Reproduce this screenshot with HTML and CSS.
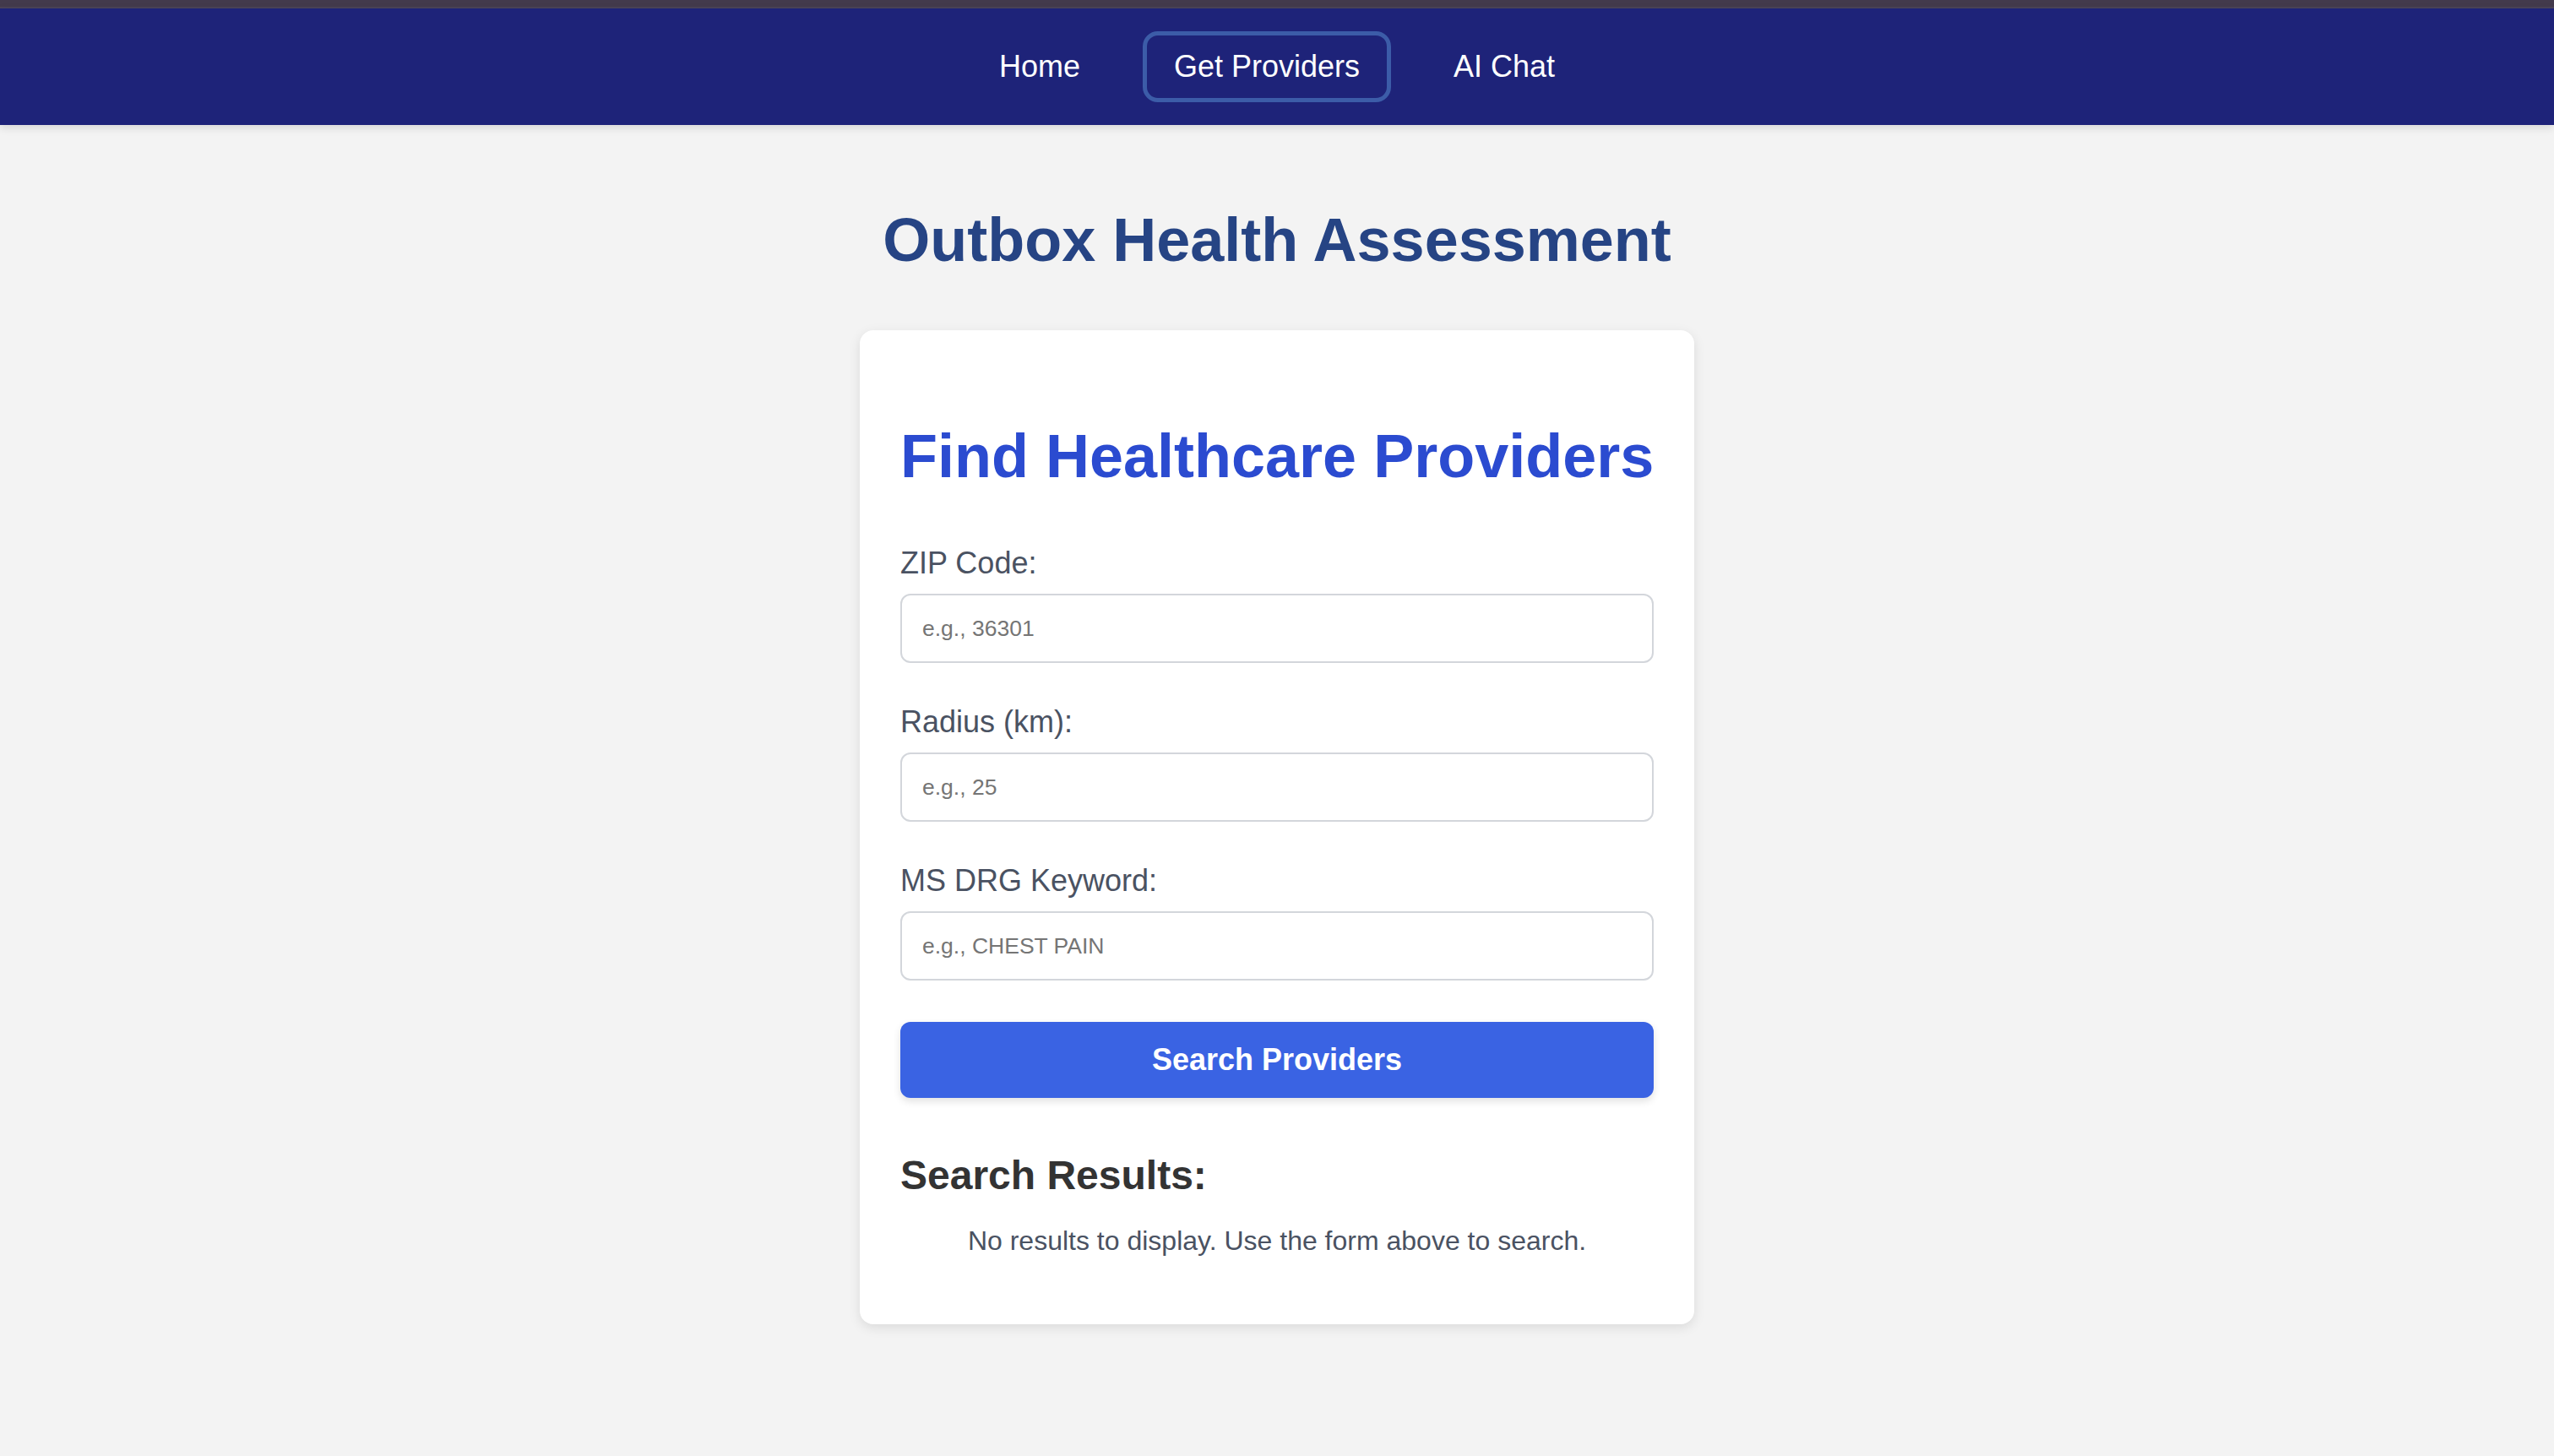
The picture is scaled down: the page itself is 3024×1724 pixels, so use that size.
FILE: index.html
```html
<!DOCTYPE html>
<html lang="en">
<head>
<meta charset="utf-8">
<title>Outbox Health Assessment</title>
<link rel="stylesheet" href="styles.css">
</head>
<body>
<div class="topstrip"></div>
<nav class="nav">
  <a class="nav-link" href="#">Home</a>
  <a class="nav-link active" href="#">Get Providers</a>
  <a class="nav-link" href="#">AI Chat</a>
</nav>
<main class="main">
  <h1 class="title">Outbox Health Assessment</h1>
  <section class="card">
    <h2 class="card-title">Find Healthcare Providers</h2>
    <form class="form">
      <div class="field">
        <label class="label" for="zip">ZIP Code:</label>
        <input class="input" id="zip" type="text" placeholder="e.g., 36301">
      </div>
      <div class="field">
        <label class="label" for="radius">Radius (km):</label>
        <input class="input" id="radius" type="text" placeholder="e.g., 25">
      </div>
      <div class="field">
        <label class="label" for="drg">MS DRG Keyword:</label>
        <input class="input" id="drg" type="text" placeholder="e.g., CHEST PAIN">
      </div>
      <button class="btn" type="button">Search Providers</button>
    </form>
    <div class="results">
      <h3 class="results-title">Search Results:</h3>
      <p class="empty">No results to display. Use the form above to search.</p>
    </div>
  </section>
</main>
</body>
</html>
```

FILE: styles.css
```css
* { box-sizing: border-box; }
html, body {
  margin: 0;
  padding: 0;
  background: #f3f3f3;
  font-family: "Liberation Sans", Arial, Helvetica, sans-serif;
}
.topstrip {
  height: 10px;
  background: #433a4c;
  border-bottom: 2px solid #4b4459;
}
.nav {
  height: 138px;
  background: #1e2379;
  display: flex;
  justify-content: center;
  align-items: center;
  gap: 37px;
  box-shadow: 0 3px 10px rgba(0, 0, 0, 0.12);
  position: relative;
}
.nav-link {
  color: #ffffff;
  text-decoration: none;
  font-size: 36px;
  line-height: 42px;
  padding: 16px 32px;
  border: 5px solid transparent;
  border-radius: 18px;
}
.nav-link.active {
  border-color: #3c5ca8;
}
.main {
  display: flex;
  flex-direction: column;
  align-items: center;
  padding-top: 95px;
  padding-bottom: 100px;
}
.title {
  margin: 0 0 65px;
  font-size: 72px;
  line-height: 83px;
  font-weight: 700;
  color: #264484;
  white-space: nowrap;
}
.card {
  width: 988px;
  background: #ffffff;
  border-radius: 16px;
  padding: 48px;
  box-shadow: 0 4px 14px rgba(0, 0, 0, 0.1);
}
.card-title {
  margin: 60px -10px 64px 0;
  font-size: 72px;
  line-height: 83px;
  font-weight: 700;
  color: #2b4bd0;
  white-space: nowrap;
}
.form {
  display: flex;
  flex-direction: column;
}
.field {
  display: flex;
  flex-direction: column;
  margin-bottom: 49px;
}
.label {
  font-size: 36px;
  line-height: 41px;
  color: #4a5262;
  margin-bottom: 16px;
}
.input {
  height: 82px;
  width: 100%;
  border: 2px solid #d3d6db;
  border-radius: 12px;
  padding: 0 24px;
  font-size: 26.5px;
  font-family: "Liberation Sans", Arial, Helvetica, sans-serif;
  color: #333;
  background: #fff;
  outline: none;
}
.input::placeholder {
  color: #757575;
}
.btn {
  height: 90px;
  width: 100%;
  border: none;
  border-radius: 12px;
  background: #3a63e3;
  color: #ffffff;
  font-size: 36px;
  font-weight: 700;
  font-family: "Liberation Sans", Arial, Helvetica, sans-serif;
  box-shadow: 0 4px 10px rgba(0, 0, 0, 0.12);
  cursor: pointer;
}
.results {
  margin-top: 64px;
}
.results-title {
  margin: 0 0 32px;
  font-size: 48px;
  line-height: 55px;
  font-weight: 700;
  color: #333333;
}
.empty {
  margin: 0 0 32px;
  font-size: 32px;
  line-height: 37px;
  color: #4a5262;
  text-align: center;
}
```
